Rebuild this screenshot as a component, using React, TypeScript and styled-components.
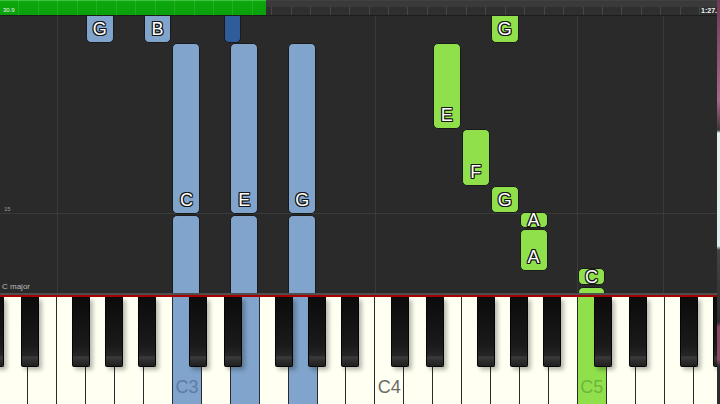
import React from 'react';
import styled, { createGlobalStyle } from 'styled-components';

const W = 28.93;
const X0 = -1.6;
const NAMES = ['C', 'D', 'E', 'F', 'G', 'A', 'B'];
const BLUE = '#80a4cc';
const DARK_BLUE = '#2f5d9c';
const GREEN = '#90e04c';

type Hand = 'left' | 'right' | 'leftBlack';

const whiteIndex = (name: string, octave: number) => (octave - 2) * 7 + NAMES.indexOf(name) - 1;
const keyLeft = (name: string, octave: number) => X0 + whiteIndex(name, octave) * W;

const whiteKeys = Array.from({ length: 26 }, (_, i) => {
  const n = i + 1;
  return { name: NAMES[n % 7], octave: 2 + Math.floor(n / 7), i };
});

const BLACK_OFFSET: Record<string, number> = { C: -3, D: 3, F: -4, G: 0, A: 4 };
const blackKeys: { id: string; center: number }[] = [];
for (let i = -1; i < 26; i++) {
  const n = i + 1;
  const name = NAMES[((n % 7) + 7) % 7];
  if (name in BLACK_OFFSET) {
    const boundary = X0 + (i + 1) * W;
    blackKeys.push({ id: `${name}#${i}`, center: boundary + BLACK_OFFSET[name] });
  }
}

const activeKeys: Record<string, { bg: string; label: string }> = {
  C3: { bg: BLUE, label: '#5d7ca3' },
  E3: { bg: BLUE, label: '#5d7ca3' },
  G3: { bg: BLUE, label: '#5d7ca3' },
  C5: { bg: GREEN, label: '#6cb63a' },
};

type NoteDef = { key: string; octave: number; sharp?: boolean; top: number; height: number; hand: Hand; label?: string };

const notes: NoteDef[] = [
  { key: 'G', octave: 2, top: -12, height: 39, hand: 'left', label: 'G' },
  { key: 'B', octave: 2, top: -12, height: 39, hand: 'left', label: 'B' },
  { key: 'D', octave: 3, sharp: true, top: -12, height: 39, hand: 'leftBlack' },
  { key: 'C', octave: 3, top: 27, height: 171, hand: 'left', label: 'C' },
  { key: 'E', octave: 3, top: 27, height: 171, hand: 'left', label: 'E' },
  { key: 'G', octave: 3, top: 27, height: 171, hand: 'left', label: 'G' },
  { key: 'C', octave: 3, top: 199, height: 110, hand: 'left' },
  { key: 'E', octave: 3, top: 199, height: 110, hand: 'left' },
  { key: 'G', octave: 3, top: 199, height: 110, hand: 'left' },
  { key: 'G', octave: 4, top: -12, height: 39, hand: 'right', label: 'G' },
  { key: 'E', octave: 4, top: 27, height: 86, hand: 'right', label: 'E' },
  { key: 'F', octave: 4, top: 113, height: 57, hand: 'right', label: 'F' },
  { key: 'G', octave: 4, top: 170, height: 27, hand: 'right', label: 'G' },
  { key: 'A', octave: 4, top: 196, height: 16, hand: 'right', label: 'A' },
  { key: 'A', octave: 4, top: 213, height: 42, hand: 'right', label: 'A' },
  { key: 'C', octave: 5, top: 252, height: 17, hand: 'right', label: 'C' },
  { key: 'C', octave: 5, top: 271, height: 40, hand: 'right' },
];

const gridXs = [57, 375, 577, 663];

const GlobalStyle = createGlobalStyle`
  html, body { margin: 0; padding: 0; background: #2a2a2a; overflow: hidden; }
  body { font-family: "Liberation Sans", Arial, sans-serif; }
`;

const Frame = styled.div`
  display: flex;
  width: 720px;
  height: 404px;
  overflow: hidden;
`;

const Main = styled.div`
  display: flex;
  flex-direction: column;
  width: 717px;
  flex: 0 0 717px;
  overflow: hidden;
`;

const EdgeStrip = styled.div`
  flex: 0 0 3px;
  background: linear-gradient(
    to bottom,
    #6e3a58 0px,
    #a56a88 100px,
    #6a4a5a 118px,
    #3a3a3a 130px,
    #e6f2f0 133px,
    #dfeeee 246px,
    #444 250px,
    #2c2c2c 322px,
    #8a4a66 327px,
    #8a4a66 360px,
    #2c2c2c 366px
  );
`;

const TopBar = styled.div`
  display: flex;
  height: 16px;
  flex: 0 0 16px;
  box-sizing: border-box;
  border-bottom: 1px solid #1c1c1c;
  background:
    repeating-linear-gradient(90deg, transparent 0 18.45px, #474747 18.45px 19.45px) left bottom / 100% 8px no-repeat,
    linear-gradient(#414141 0 1px, #3a3a3a 1px 7px, #2f2f2f 7px);
`;

const Progress = styled.div`
  width: 266px;
  display: flex;
  align-items: flex-end;
  padding: 0 0 1px 3px;
  box-sizing: border-box;
  background:
    repeating-linear-gradient(90deg, transparent 0 18.45px, rgba(255, 255, 255, 0.1) 18.45px 19.45px),
    linear-gradient(#3cc43c 0 1px, #0da80d 1px, #0a9f0a);
`;

const Remaining = styled.div`
  flex: 1;
  display: flex;
  align-items: flex-end;
  justify-content: flex-end;
  padding-bottom: 1px;
`;

const TimeLabel = styled.span<{ $bold?: boolean }>`
  font-size: ${(p) => (p.$bold ? 7 : 6)}px;
  line-height: 7px;
  font-weight: ${(p) => (p.$bold ? 700 : 400)};
  color: ${(p) => (p.$bold ? '#f4f4f4' : '#e6f5e6')};
`;

const Board = styled.div`
  position: relative;
  height: 277px;
  flex: 0 0 277px;
  background: #2a2a2a;
  overflow: hidden;
`;

const VLine = styled.div`
  position: absolute;
  top: 0;
  bottom: 0;
  width: 1px;
  background: #3a3a3a;
`;

const HLine = styled.div`
  position: absolute;
  left: 0;
  right: 0;
  top: 197px;
  height: 1px;
  background: #3a3a3a;
`;

const MeasureLabel = styled.span`
  position: absolute;
  left: 4px;
  top: 190px;
  font-size: 6px;
  color: #9a9a9a;
`;

const KeyLabel = styled.span`
  position: absolute;
  left: 2px;
  bottom: 2px;
  font-size: 8px;
  color: #bcbcbc;
`;

const noteBg = (h: Hand) => (h === 'left' ? BLUE : h === 'right' ? GREEN : DARK_BLUE);

const Note = styled.div<{ $hand: Hand }>`
  position: absolute;
  box-sizing: border-box;
  border: 1px solid #1a1a1a;
  border-radius: 5px;
  background: ${(p) => noteBg(p.$hand)};
  display: flex;
  flex-direction: column;
  justify-content: flex-end;
  align-items: center;
`;

const NoteLetter = styled.span`
  height: 27px;
  max-height: 100%;
  display: flex;
  align-items: center;
  justify-content: center;
  font-size: 18px;
  line-height: 1;
  color: #ffffff;
  text-shadow:
    -1px -1px 0 #151515, 1px -1px 0 #151515, -1px 1px 0 #151515, 1px 1px 0 #151515,
    0 -1px 0 #151515, 0 1px 0 #151515, -1px 0 0 #151515, 1px 0 0 #151515;
`;

const Keyboard = styled.div`
  flex: 1;
  display: flex;
  flex-direction: column;
  border-top: 2px solid #4f4f4f;
  background: #1a1a1a;
`;

const RedRail = styled.div`
  height: 2px;
  flex: 0 0 2px;
  background: #a80000;
`;

const KeysRow = styled.div`
  position: relative;
  flex: 1;
  display: flex;
  margin-left: ${X0}px;
`;

const WhiteKey = styled.div<{ $bg: string }>`
  flex: 0 0 ${W}px;
  box-sizing: border-box;
  border-left: 1px solid #2a2a2a;
  background: ${(p) => p.$bg};
  display: flex;
  align-items: flex-end;
  justify-content: center;
  padding-bottom: 8px;
`;

const OctaveLabel = styled.span<{ $color: string }>`
  font-size: 18px;
  line-height: 1;
  color: ${(p) => p.$color};
`;

const BlackKey = styled.div`
  position: absolute;
  top: 0;
  width: 18px;
  height: 70px;
  box-sizing: border-box;
  border: 1px solid #050505;
  border-top: none;
  border-radius: 0 0 2px 2px;
  background: linear-gradient(
    to bottom,
    #0b0b0b 0%,
    #1a1a1a 70%,
    #262626 85%,
    #3c3c3c 87%,
    #2e2e2e 92%,
    #202020 100%
  );
  box-shadow: 3px 3px 4px rgba(0, 0, 0, 0.28);
`;

export default function App() {
  return (
    <>
      <GlobalStyle />
      <Frame>
        <Main>
          <TopBar>
            <Progress>
              <TimeLabel>30.9</TimeLabel>
            </Progress>
            <Remaining>
              <TimeLabel $bold>1:27.</TimeLabel>
            </Remaining>
          </TopBar>
          <Board>
            {gridXs.map((x) => (
              <VLine key={x} style={{ left: x }} />
            ))}
            <HLine />
            <MeasureLabel>15</MeasureLabel>
            <KeyLabel>C major</KeyLabel>
            {notes.map((n, i) => {
              let left: number;
              let width: number;
              if (n.sharp) {
                const center = keyLeft(n.key, n.octave) + W + BLACK_OFFSET[n.key];
                width = 17;
                left = center - 8.5;
              } else {
                left = keyLeft(n.key, n.octave) + 0.5;
                width = W - 1;
              }
              return (
                <Note key={i} $hand={n.hand} style={{ left, top: n.top, width, height: n.height }}>
                  {n.label && <NoteLetter>{n.label}</NoteLetter>}
                </Note>
              );
            })}
          </Board>
          <Keyboard>
            <RedRail />
            <KeysRow>
              {whiteKeys.map((k) => {
                const id = `${k.name}${k.octave}`;
                const active = activeKeys[id];
                return (
                  <WhiteKey key={id} $bg={active ? active.bg : '#fffff2'}>
                    {k.name === 'C' && (
                      <OctaveLabel $color={active ? active.label : '#6b6b66'}>{id}</OctaveLabel>
                    )}
                  </WhiteKey>
                );
              })}
              {blackKeys.map((b) => (
                <BlackKey key={b.id} style={{ left: b.center - X0 - 9 }} />
              ))}
            </KeysRow>
          </Keyboard>
        </Main>
        <EdgeStrip />
      </Frame>
    </>
  );
}
